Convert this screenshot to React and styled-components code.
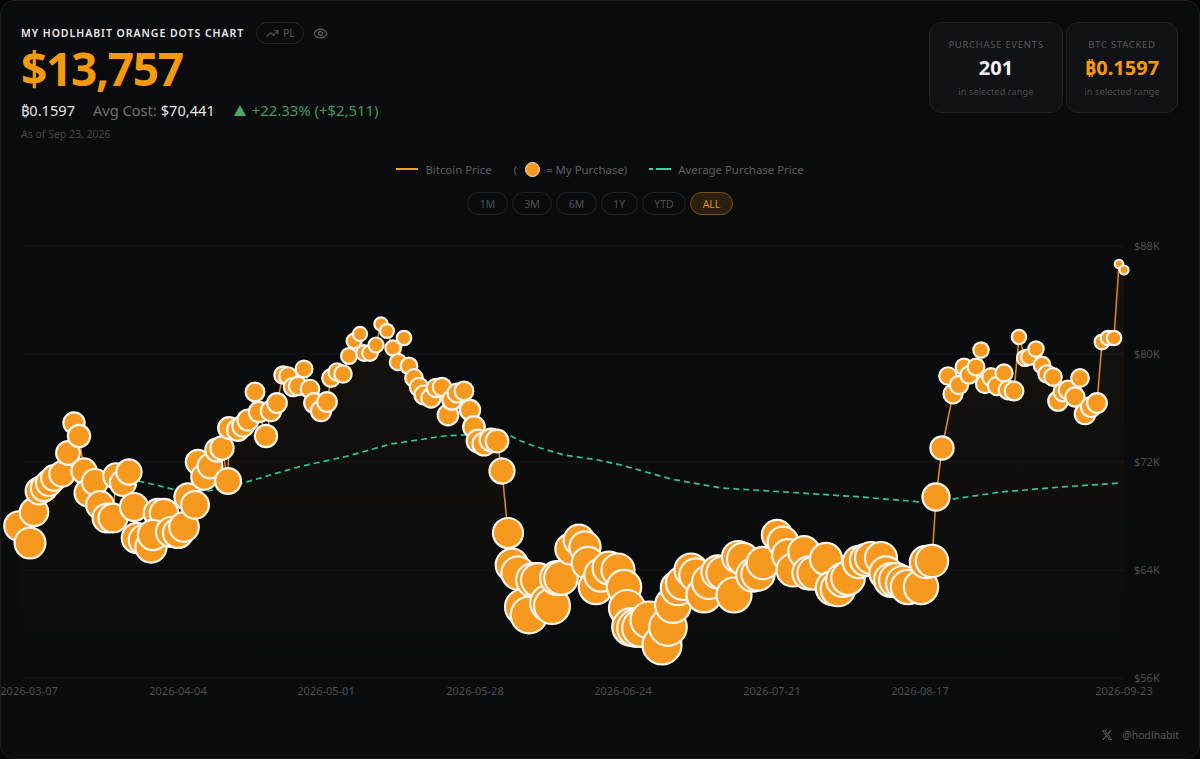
import React from "react";
import styled, { createGlobalStyle } from "styled-components";
import { TrendingUp, Eye } from "lucide-react";
import { FaXTwitter } from "react-icons/fa6";

const GlobalStyle = createGlobalStyle`
	html, body {
		margin: 0;
		padding: 0;
		background: #050506;
	}
	* {
		box-sizing: border-box;
	}
`;

const FONT = `"Noto Sans", "Open Sans", "DejaVu Sans", sans-serif`;
const ORANGE = "#f7981f";

// purchases in chart pixels, oldest first
const PURCHASES = [
	[18, 526], [29, 543], [33, 512], [38, 491], [43, 488], [48, 483], [53, 478], [61, 474], [67, 453], [73, 423],
	[78, 436], [83, 471], [87, 493], [94, 482], [99, 505], [106, 518], [112, 518], [115, 476], [122, 483], [128, 472],
	[133, 507], [136, 538], [143, 540], [150, 547], [157, 513], [163, 513], [152, 535], [170, 532], [177, 533], [183, 527],
	[187, 497], [194, 505], [197, 462], [203, 477], [209, 466], [216, 450], [221, 448], [227, 481], [228, 428], [237, 430],
	[242, 426], [247, 420], [254, 392], [258, 412], [265, 436], [270, 411], [276, 403], [282, 375], [287, 376], [292, 387],
	[297, 386], [303, 369], [309, 389], [313, 403], [320, 411], [326, 402], [330, 378], [336, 372], [342, 374], [348, 356],
	[353, 341], [359, 334], [363, 353], [369, 353], [375, 345], [380, 324], [386, 331], [392, 348], [403, 338], [397, 362],
	[408, 366], [413, 378], [418, 387], [423, 395], [430, 398], [435, 388], [441, 387], [447, 415], [451, 400], [456, 393],
	[463, 391], [469, 410], [473, 427], [477, 441], [483, 444], [490, 440], [496, 441], [501, 471], [507, 533], [511, 565],
	[517, 573], [522, 607], [528, 615], [532, 580], [537, 580], [547, 603], [551, 606], [556, 578], [560, 578], [570, 549],
	[578, 540], [584, 547], [587, 563], [595, 587], [600, 575], [608, 568], [617, 570], [623, 587], [626, 608], [630, 627],
	[635, 628], [640, 628], [648, 620], [661, 645], [667, 627], [672, 605], [677, 588], [682, 583], [690, 570], [695, 575],
	[703, 595], [708, 582], [717, 572], [722, 573], [733, 595], [737, 557], [742, 559], [752, 575], [757, 574], [762, 563],
	[776, 535], [782, 542], [787, 555], [792, 570], [803, 552], [808, 573], [813, 573], [825, 559], [832, 588], [837, 589],
	[842, 580], [847, 578], [858, 562], [865, 560], [870, 558], [880, 558], [885, 573], [890, 580], [895, 580], [902, 583],
	[907, 587], [920, 587], [925, 562], [931, 561], [935, 497], [941, 448], [952, 394], [947, 376], [958, 385], [963, 367],
	[968, 375], [975, 367], [980, 350], [984, 384], [990, 377], [996, 386], [1003, 373], [1007, 390], [1013, 391], [1018, 337],
	[1024, 358], [1028, 357], [1035, 349], [1041, 365], [1046, 374], [1052, 377], [1057, 401], [1062, 392], [1067, 390], [1074, 397],
	[1079, 378], [1084, 414], [1090, 407], [1096, 403], [1101, 342], [1107, 338], [1113, 338], [1118, 264], [1123, 270],
];

const AVERAGE = [
	[70, 462], [133, 480], [155, 485], [175, 490], [207, 491], [242, 483], [297, 467], [347, 456], [390, 444], [443, 436],
	[462, 435], [490, 433], [510, 436], [520, 441], [533, 446], [563, 455], [597, 460], [620, 465], [670, 479], [720, 488],
	[800, 493], [860, 497], [920, 502], [945, 500], [1000, 492], [1060, 487], [1120, 483],
];

const GRID = [
	{ y: 246, label: "$88K" },
	{ y: 354, label: "$80K" },
	{ y: 462, label: "$72K" },
	{ y: 570, label: "$64K" },
	{ y: 678, label: "$56K" },
];

const DATES = [
	["2026-03-07", 28], ["2026-04-04", 177], ["2026-05-01", 325], ["2026-05-28", 474],
	["2026-06-24", 622], ["2026-07-21", 771], ["2026-08-17", 919], ["2026-09-23", 1123],
];

const RANGES = ["1M", "3M", "6M", "1Y", "YTD", "ALL"];

const toPoints = (list) => list.map((p) => p.join(",")).join(" ");
const dotRadius = (y) => 4.3 + (y - 265) * 0.04;

const Card = styled.div`
	width: 1200px;
	height: 759px;
	display: flex;
	flex-direction: column;
	overflow: hidden;
	background: #0a0b0d;
	border: 1px solid #191a1d;
	border-radius: 14px;
	font-family: ${FONT};
`;

const Header = styled.header`
	display: flex;
	justify-content: space-between;
	align-items: flex-start;
	padding: 21px 21px 0 20px;
	height: 157px;
`;

const Summary = styled.div`
	display: flex;
	flex-direction: column;
`;

const TitleRow = styled.div`
	display: flex;
	align-items: center;
	height: 22px;
`;

const Title = styled.h1`
	margin: 0;
	font-size: 10.5px;
	font-weight: 600;
	letter-spacing: 0.97px;
	color: #e8e8e8;
	white-space: nowrap;
`;

const Pill = styled.span`
	display: flex;
	align-items: center;
	gap: 4px;
	height: 22px;
	margin-left: 12px;
	padding: 0 9px;
	border: 1px solid #232427;
	border-radius: 11px;
	font-size: 10px;
	color: #55575b;
`;

const EyeButton = styled.span`
	display: flex;
	margin-left: 9px;
	color: #5a5c60;
`;

const Amount = styled.div`
	font-size: 46px;
	line-height: 48px;
	font-weight: 700;
	letter-spacing: -1.3px;
	color: #f59a0e;
`;

const Stats = styled.div`
	display: flex;
	align-items: center;
	margin-top: 6px;
	height: 24px;
	font-size: 14.6px;
	color: #e6e6e6;
	white-space: nowrap;
`;

const Muted = styled.span`
	margin-left: 18px;
	color: #6e7074;
`;

const Value = styled.span`
	margin-left: 4px;
	color: #e6e6e6;
`;

const Change = styled.span`
	display: flex;
	align-items: center;
	gap: 6px;
	margin-left: 19px;
	font-size: 14.9px;
	color: #3f9a5d;
`;

const UpTriangle = styled.i`
	width: 0;
	height: 0;
	border-left: 6px solid transparent;
	border-right: 6px solid transparent;
	border-bottom: 11px solid #4aa870;
`;

const AsOf = styled.div`
	margin-top: 5px;
	font-size: 10.5px;
	color: #44464a;
`;

const StatCards = styled.div`
	display: flex;
	gap: 3px;
`;

const StatCard = styled.div`
	width: ${(p) => p.$width}px;
	height: 91px;
	display: flex;
	flex-direction: column;
	align-items: center;
	padding-top: 15px;
	background: #111215;
	border: 1px solid #1e1f22;
	border-radius: 12px;
`;

const StatLabel = styled.div`
	font-size: 9.5px;
	line-height: 14px;
	letter-spacing: 0.7px;
	color: #56585c;
`;

const StatValue = styled.div`
	margin-top: 2px;
	font-size: 20px;
	line-height: 28px;
	font-weight: 700;
	color: ${(p) => p.$color};
`;

const StatNote = styled.div`
	margin-top: 3px;
	font-size: 9.4px;
	line-height: 14px;
	color: #45474b;
`;

const Legend = styled.div`
	display: flex;
	justify-content: center;
	align-items: center;
	height: 22px;
	font-size: 11.4px;
	color: #5c5e62;
`;

const LegendItem = styled.span`
	display: flex;
	align-items: center;
	margin-left: ${(p) => p.$gap || 0}px;
`;

const LegendDot = styled.span`
	width: 15px;
	height: 15px;
	margin: 0 6px 0 8px;
	border-radius: 50%;
	background: ${ORANGE};
	border: 1px solid #f5e3c8;
`;

const LegendLine = styled.span`
	width: 22px;
	height: 2px;
	margin-right: 7px;
	background: ${ORANGE};
`;

const LegendDash = styled.svg`
	width: 22px;
	height: 2px;
	margin-right: 7px;
`;

const Ranges = styled.div`
	display: flex;
	justify-content: center;
	gap: 4px;
	margin-top: 12px;
`;

const RangeButton = styled.button`
	height: 23px;
	padding: 0 11.5px;
	font-family: ${FONT};
	font-size: 10.5px;
	color: ${(p) => (p.$active ? "#d98e1e" : "#4d4f53")};
	background: ${(p) => (p.$active ? "#2c1f0f" : "transparent")};
	border: 1px solid ${(p) => (p.$active ? "#7a5016" : "#232427")};
	border-radius: 12px;
`;

const Chart = styled.svg`
	display: block;
	flex: none;
	width: 1198px;
	height: 470px;
	margin-top: 21px;
`;

const GridLine = styled.line`
	stroke: #15161a;
	stroke-width: 1;
`;

const AxisText = styled.text`
	font-family: ${FONT};
	font-size: 11px;
	fill: #4a4c50;
`;

const PriceLine = styled.polyline`
	fill: none;
	stroke: #d9851c;
	stroke-width: 1.6;
`;

const AverageLine = styled.polyline`
	fill: none;
	stroke: #2fc795;
	stroke-width: 1.7;
	stroke-dasharray: 6 4;
`;

const Dot = styled.circle`
	fill: ${ORANGE};
	stroke: #fdf6ec;
	stroke-width: 2.2;
`;

const Footer = styled.footer`
	display: flex;
	justify-content: flex-end;
	align-items: center;
	gap: 9px;
	padding: 22px 20px 0 0;
	font-size: 10.5px;
	color: #55575b;
`;

export default function App() {
	const first = PURCHASES[0];
	const last = PURCHASES[PURCHASES.length - 1];
	const areaPoints = toPoints([[first[0], 678], ...PURCHASES, [last[0], 678]]);

	return (
		<Card>
			<GlobalStyle />
			<Header>
				<Summary>
					<TitleRow>
						<Title>MY HODLHABIT ORANGE DOTS CHART</Title>
						<Pill>
							<TrendingUp size={13} />
							PL
						</Pill>
						<EyeButton>
							<Eye size={15} />
						</EyeButton>
					</TitleRow>
					<Amount>$13,757</Amount>
					<Stats>
						₿0.1597
						<Muted>Avg Cost:</Muted>
						<Value>$70,441</Value>
						<Change>
							<UpTriangle />
							+22.33% (+$2,511)
						</Change>
					</Stats>
					<AsOf>As of Sep 23, 2026</AsOf>
				</Summary>
				<StatCards>
					<StatCard $width={134}>
						<StatLabel>PURCHASE EVENTS</StatLabel>
						<StatValue $color="#f2f2f2">201</StatValue>
						<StatNote>in selected range</StatNote>
					</StatCard>
					<StatCard $width={112}>
						<StatLabel>BTC STACKED</StatLabel>
						<StatValue $color="#f59a0e">₿0.1597</StatValue>
						<StatNote>in selected range</StatNote>
					</StatCard>
				</StatCards>
			</Header>
			<Legend>
				<LegendItem>
					<LegendLine />
					Bitcoin Price
				</LegendItem>
				<LegendItem $gap={22}>
					(
					<LegendDot />
					= My Purchase)
				</LegendItem>
				<LegendItem $gap={22}>
					<LegendDash viewBox="0 0 22 2">
						<line x1="0" y1="1" x2="22" y2="1" stroke="#2fd6a0" strokeWidth="2" strokeDasharray="4 3 15" />
					</LegendDash>
					Average Purchase Price
				</LegendItem>
			</Legend>
			<Ranges>
				{RANGES.map((range) => (
					<RangeButton key={range} $active={range === "ALL"}>
						{range}
					</RangeButton>
				))}
			</Ranges>
			<Chart viewBox="0 236 1198 470">
				<defs>
					<linearGradient id="priceArea" x1="0" y1="0" x2="0" y2="1">
						<stop offset="0" stopColor="#f7931a" stopOpacity="0.05" />
						<stop offset="1" stopColor="#f7931a" stopOpacity="0" />
					</linearGradient>
				</defs>
				{GRID.map((g) => (
					<g key={g.label}>
						<GridLine x1="22" y1={g.y} x2="1123" y2={g.y} />
						<AxisText x="1133" y={g.y + 4}>
							{g.label}
						</AxisText>
					</g>
				))}
				{DATES.map(([label, x]) => (
					<AxisText key={label} x={x} y="695" textAnchor="middle">
						{label}
					</AxisText>
				))}
				<polygon points={areaPoints} fill="url(#priceArea)" />
				<PriceLine points={toPoints(PURCHASES)} />
				<AverageLine points={toPoints(AVERAGE)} />
				{PURCHASES.map(([x, y], i) => (
					<Dot key={i} cx={x} cy={y} r={dotRadius(y)} />
				))}
			</Chart>
			<Footer>
				<FaXTwitter size={12} />
				@hodlhabit
			</Footer>
		</Card>
	);
}
